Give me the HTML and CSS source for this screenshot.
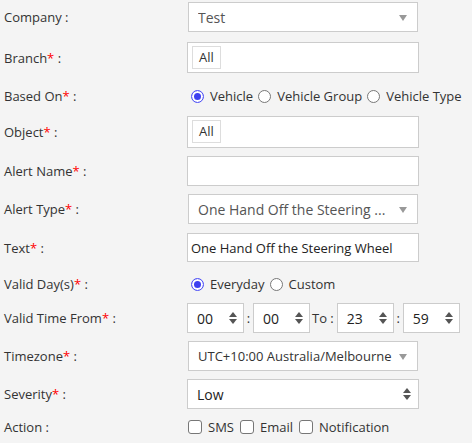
FILE: index.html
```html
<!DOCTYPE html>
<html lang="en">
<head>
    <meta charset="UTF-8">
    <title>Alert Setting</title>
    <link rel="stylesheet" href="styles.css">
</head>
<body>
<form class="alert-form">
    <div class="row r-company">
        <label class="lbl">Company :</label>
        <div class="sel">
            <span class="sel-text">Test</span>
            <span class="caret"></span>
        </div>
    </div>

    <div class="row r-branch">
        <label class="lbl">Branch<span class="req">*</span> :</label>
        <div class="multi"><span class="tag">All</span></div>
    </div>

    <div class="row r-radio r-based">
        <label class="lbl">Based On<span class="req">*</span> :</label>
        <div class="opts">
            <span class="radio on"></span><span class="opt">Vehicle</span>
            <span class="radio"></span><span class="opt">Vehicle Group</span>
            <span class="radio"></span><span class="opt">Vehicle Type</span>
        </div>
    </div>

    <div class="row r-object">
        <label class="lbl">Object<span class="req">*</span> :</label>
        <div class="multi"><span class="tag">All</span></div>
    </div>

    <div class="row">
        <label class="lbl">Alert Name<span class="req">*</span> :</label>
        <input class="txt" type="text">
    </div>

    <div class="row r-type">
        <label class="lbl">Alert Type<span class="req">*</span> :</label>
        <div class="sel">
            <span class="sel-text">One Hand Off the Steering ...</span>
            <span class="caret"></span>
        </div>
    </div>

    <div class="row r-text">
        <label class="lbl">Text<span class="req">*</span> :</label>
        <input class="txt" type="text" value="One Hand Off the Steering Wheel">
    </div>

    <div class="row r-radio r-days">
        <label class="lbl">Valid Day(s)<span class="req">*</span> :</label>
        <div class="opts">
            <span class="radio on"></span><span class="opt">Everyday</span>
            <span class="radio"></span><span class="opt">Custom</span>
        </div>
    </div>

    <div class="row">
        <label class="lbl">Valid Time From<span class="req">*</span> :</label>
        <div class="times">
            <div class="spin"><span>00</span><span class="updown"></span></div>
            <span class="sep">:</span>
            <div class="spin"><span>00</span><span class="updown"></span></div>
            <span class="to">To :</span>
            <div class="spin"><span>23</span><span class="updown"></span></div>
            <span class="sep">:</span>
            <div class="spin"><span>59</span><span class="updown"></span></div>
        </div>
    </div>

    <div class="row">
        <label class="lbl">Timezone<span class="req">*</span> :</label>
        <div class="sel">
            <span class="sel-text tz">UTC+10:00 Australia/Melbourne</span>
            <span class="caret"></span>
        </div>
    </div>

    <div class="row r-sev">
        <label class="lbl">Severity<span class="req">*</span> :</label>
        <div class="native">
            <span>Low</span>
            <span class="updown"></span>
        </div>
    </div>

    <div class="row r-check">
        <label class="lbl">Action :</label>
        <div class="opts">
            <span class="check"></span><span class="opt">SMS</span>
            <span class="check"></span><span class="opt">Email</span>
            <span class="check"></span><span class="opt">Notification</span>
        </div>
    </div>
</form>
</body>
</html>
```

FILE: styles.css
```css
body {
    margin: 0;
    background: #f4f4f4;
    font-family: "Open Sans", Arial, sans-serif;
    font-size: 13px;
    color: #333;
}
.alert-form {
    padding: 2px 0 0 4px;
}
.row {
    display: flex;
    align-items: center;
    height: 30px;
    margin-bottom: 8px;
}
.lbl {
    width: 183px;
    flex-shrink: 0;
}
.req {
    color: #f00;
}
.r-company { margin-bottom: 10px; }
.r-branch { height: 31px; margin-bottom: 12px; }
.r-radio { height: 22px; margin-bottom: 9px; }
.r-object { height: 32px; }
.r-type { margin-bottom: 9px; }
.r-text { height: 29px; margin-bottom: 11px; }
.r-days { margin-bottom: 8px; }
.r-sev { margin-bottom: 7px; }
.r-check { height: 22px; }

.sel, .native, .multi, .txt {
    box-sizing: border-box;
    height: 100%;
    background: #fff;
    border: 1px solid #ccc;
}
.sel {
    width: 230px;
    margin-left: 1px;
    display: flex;
    align-items: center;
    padding: 0 10px 0 9px;
    color: #555;
    font-size: 14px;
}
.sel-text {
    flex: 1;
    white-space: nowrap;
    overflow: hidden;
}
.tz {
    font-size: 13px;
    color: #333;
}
.caret {
    width: 0;
    height: 0;
    border-left: 4px solid transparent;
    border-right: 4px solid transparent;
    border-top: 6px solid #999;
    margin-top: 2px;
}
.multi {
    width: 232px;
    padding: 3px 4px;
}
.tag {
    display: inline-block;
    box-sizing: border-box;
    height: 23px;
    line-height: 21px;
    padding: 0 6px;
    border: 1px solid #ddd;
    background: #fff;
    color: #333;
}
.txt {
    width: 232px;
    padding: 0 3px;
    font-family: inherit;
    font-size: 13px;
    color: #222;
    outline: none;
}
.native {
    width: 232px;
    display: flex;
    align-items: center;
    justify-content: space-between;
    padding: 0 7px 0 9px;
    font-size: 14px;
    color: #222;
}

.opts {
    display: flex;
    align-items: center;
}
.radio {
    box-sizing: border-box;
    width: 13px;
    height: 13px;
    border: 1px solid #777;
    border-radius: 50%;
    margin: 0 6px 0 4px;
    background: #fff;
}
.radio.on {
    border: 1px solid #4a4cf5;
    box-shadow: inset 0 0 0 2px #fff, inset 0 0 0 8px #3d3ff0;
}
.opt {
    margin-right: 1px;
}
.check {
    box-sizing: border-box;
    width: 14px;
    height: 14px;
    border: 1px solid #777;
    border-radius: 3px;
    background: #fff;
    margin: 0 6px 0 1px;
}
.opt + .check {
    margin-left: 5px;
}

.times {
    display: flex;
    align-items: center;
    height: 100%;
}
.spin {
    box-sizing: border-box;
    width: 57px;
    height: 100%;
    background: #fff;
    border: 1px solid #ccc;
    display: flex;
    align-items: center;
    justify-content: space-between;
    padding: 0 6px 0 9px;
    font-size: 14px;
    color: #222;
}
.sep {
    width: 9px;
    text-align: center;
}
.to {
    margin: 0 3px 0 2px;
    white-space: nowrap;
}
.updown {
    position: relative;
    width: 8px;
    height: 12px;
}
.updown::before, .updown::after {
    content: "";
    position: absolute;
    left: 0;
    border-left: 4px solid transparent;
    border-right: 4px solid transparent;
}
.updown::before {
    top: 0;
    border-bottom: 5px solid #555;
}
.updown::after {
    bottom: 0;
    border-top: 5px solid #555;
}
```
